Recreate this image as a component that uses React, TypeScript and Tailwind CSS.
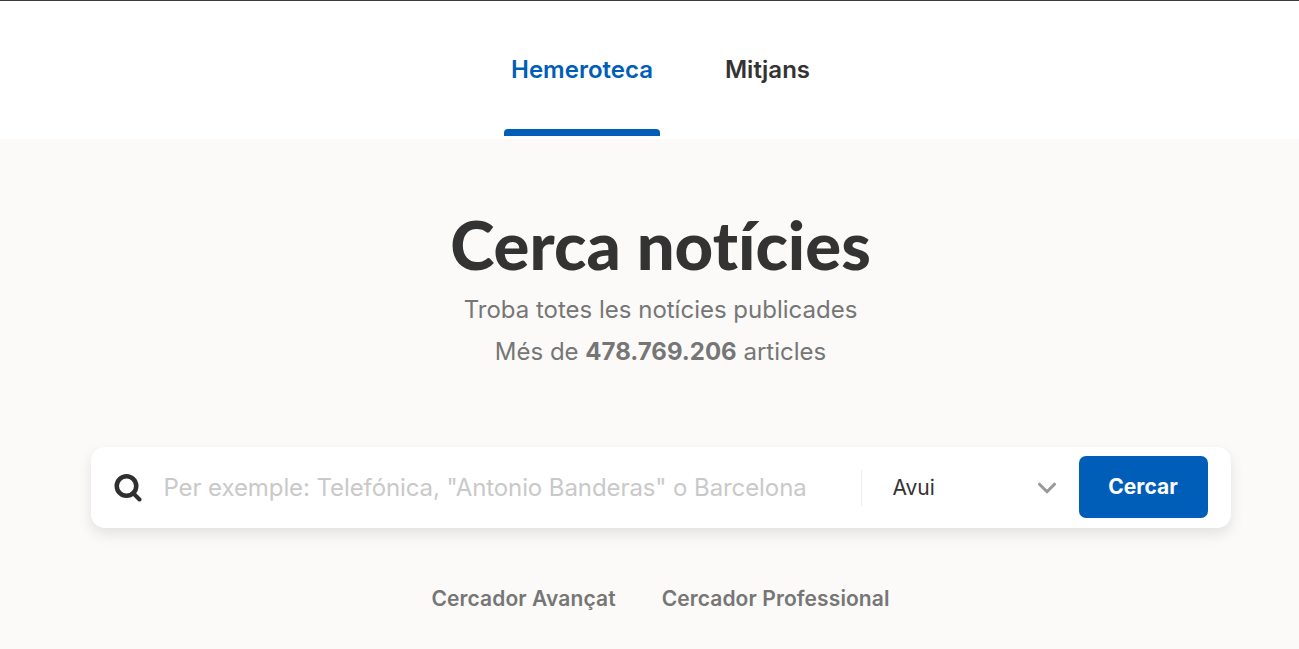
import { ChevronDown } from "lucide-react";

export default function App() {
    return (
        <div className="h-[649px] overflow-hidden bg-[#fbfaf8] font-['Inter',sans-serif]">
            <nav className="flex h-[139px] justify-center gap-[58px] border-t border-[#3c3c3c] bg-white pl-[22px]">
                <div className="relative flex h-[128px] w-[156px] flex-col items-center">
                    <a className="mt-[53px] ml-px text-[24px] leading-[32px] font-semibold text-[#005eb8]">
                        Hemeroteca
                    </a>
                    <span className="absolute bottom-[-7px] left-0 h-[7px] w-full rounded-t-[4px] bg-[#005eb8]" />
                </div>
                <div className="flex h-[128px] w-[100px] flex-col items-center">
                    <a className="mt-[53px] text-[24px] leading-[32px] font-semibold text-[#333333]">
                        Mitjans
                    </a>
                </div>
            </nav>
            <main className="flex flex-col items-center pl-[22px]">
                <h1 className="mt-[69px] font-['Lato',sans-serif] text-[67px] leading-[72px] font-black text-[#333333] [font-variant-ligatures:none]">
                    Cerca notícies
                </h1>
                <p className="mt-[9px] text-[24px] leading-[42px] text-[#767676]">
                    Troba totes les notícies publicades
                </p>
                <p className="text-[24px] leading-[42px] text-[#767676]">
                    Més de <strong className="font-bold">478.769.206</strong> articles
                </p>
                <div className="mt-[74px] flex h-[81px] w-[1140px] items-center rounded-[14px] bg-white pr-[23px] pl-[23px] shadow-[0_6px_14px_rgba(0,0,0,0.1)]">
                    <svg viewBox="0 0 28 28" className="h-[28px] w-[28px] shrink-0 text-[#2f2f2f]" fill="none" stroke="currentColor">
                        <circle cx="12.5" cy="12" r="9.75" strokeWidth="4.5" />
                        <path d="M20 20 L25.5 25.5" strokeWidth="4" strokeLinecap="round" />
                    </svg>
                    <span className="ml-[22px] w-[697px] text-[24px] tracking-[-0.09px] whitespace-nowrap text-[#c9c9c9]">
                        Per exemple: Telefónica, "Antonio Banderas" o Barcelona
                    </span>
                    <div className="h-[36px] w-px bg-[#eeeeee]" />
                    <span className="ml-[31px] w-[139px] text-[21px] text-[#333333]">Avui</span>
                    <ChevronDown className="h-[30px] w-[30px] text-[#999999]" strokeWidth={2.5} />
                    <button className="mb-px ml-[17px] h-[62px] w-[129px] rounded-[7px] bg-[#005eb8] text-[21px] font-bold text-white">
                        Cercar
                    </button>
                </div>
                <div className="mt-[57px] flex gap-[46px] text-[21px] leading-[28px] font-semibold tracking-[0.1px] text-[#767676]">
                    <a>Cercador Avançat</a>
                    <a>Cercador Professional</a>
                </div>
            </main>
        </div>
    );
}
